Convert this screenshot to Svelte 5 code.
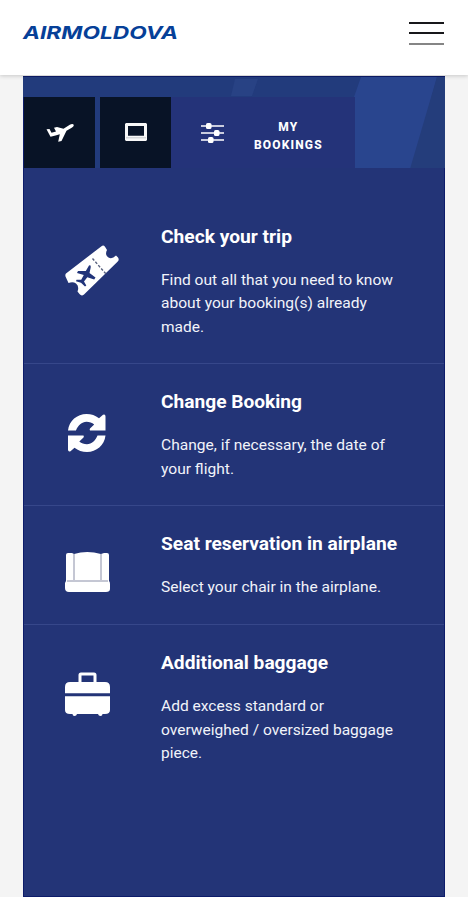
<script lang="ts">
	type Service = { icon: string; title: string; lines: string[]; width: number; widths: number[] };

	const services: Service[] = [
		{
			icon: 'ticket',
			title: 'Check your trip',
			width: 131,
			lines: ['Find out all that you need to know', 'about your booking(s) already', 'made.'],
			widths: [232, 206, 43]
		},
		{
			icon: 'refresh',
			title: 'Change Booking',
			width: 141,
			lines: ['Change, if necessary, the date of', 'your flight.'],
			widths: [224, 73]
		},
		{
			icon: 'seat',
			title: 'Seat reservation in airplane',
			width: 236,
			lines: ['Select your chair in the airplane.'],
			widths: [220]
		},
		{
			icon: 'baggage',
			title: 'Additional baggage',
			width: 167,
			lines: ['Add excess standard or', 'overweighed / oversized baggage', 'piece.'],
			widths: [163, 232, 41]
		}
	];

	const arrow =
		'M1 17.5C2 7.8 10.2 1 19.5 1 24.2 1 28.5 2.5 32 5.3L36 1.8Q38.5 1 38.5 3.5V17.5H23Q22.3 16.5 23 15.5L27.2 11.5C25 9.7 22.5 8.8 19.5 8.8 14.8 8.8 11 12.4 9 17.5z';
</script>

<div class="page">
	<header>
		<svg class="logo" width="156" height="20" viewBox="0 0 156 20" role="img" aria-label="Air Moldova">
			<text x="-1" y="16.2" textLength="155" lengthAdjust="spacingAndGlyphs">AIRMOLDOVA</text>
		</svg>
		<button class="menu" aria-label="Menu">
			<span></span>
			<span></span>
			<span></span>
		</button>
	</header>

	<main>
		<nav>
			<svg class="pattern" width="422" height="91" viewBox="0 0 422 91" aria-hidden="true">
				<path d="M0 0H236L228 20H0z" fill="#223b7c" />
				<path d="M212 2H235L229 19H208z" fill="#284284" />
				<path d="M338 0H414L389 92H331V20z" fill="#29458e" />
				<path d="M414 0H422V92H387z" fill="#243d7b" />
			</svg>
			<button class="tab" aria-label="Flights">
				<svg width="28" height="20" viewBox="0 0 28 20">
					<path
						d="M.5 6.3 3.5 6 5.5 9.8 10 8.5 8 4.7 11 4 17.5 5.8 23.8 1.8C25.6.8 27 .7 27.7 1.8 28 3 27 4.2 25.3 5.1L20.5 7.8 15.5 18 12.2 18.8 13.8 11.2 9.5 12.5 4.5 13.7z"
						fill="#fff"
					/>
				</svg>
			</button>
			<button class="tab" aria-label="Check-in">
				<svg width="22" height="19" viewBox="0 0 22 19">
					<path d="M1 0H21L22 1V17L21 18H1L0 17V1zM3 3V12.8H19V3z" fill="#f8f8f8" fill-rule="evenodd" />
					<path d="M1 14.8H21" stroke="#b9bcc2" stroke-width=".8" />
				</svg>
			</button>
			<button class="tab active">
				<svg width="23" height="22" viewBox="0 0 23 22">
					<path d="M0 4H23M0 11H23M0 18H23" stroke="#fff" stroke-width="1.6" />
					<g fill="#fff">
						<rect x="5" y="1" width="5.5" height="6" rx="1.6" />
						<rect x="13" y="8" width="5.5" height="6" rx="1.6" />
						<rect x="7" y="15" width="5.5" height="6" rx="1.6" />
					</g>
				</svg>
				<span>MY<br />BOOKINGS</span>
			</button>
		</nav>

		<div class="services">
			{#each services as service}
				<section>
					<div class="icon {service.icon}">
						{#if service.icon === 'ticket'}
							<svg width="54" height="52" viewBox="0 0 54 52">
								<path
									d="M1 28.5 36.5 1.2Q38.5-.2 40 1.8L42 5Q39.5 10 43.5 12.5 47 14.5 51 10.5L53 12.5Q54.6 14.8 52.5 16.8L19 49.5Q16.5 51.5 14.5 49L12.5 46.5Q14.5 41 11 38.5 8 36.5 3.5 38L.5 31.5Q0 29.5 1 28.5z"
									fill="#fff"
								/>
								<path
									d="M24 20.5Q26.2 19.5 25.7 22.5L24.5 28 30.5 32.5 29.2 34.5 22.3 32.2 19 36.5 21.3 40.5 20 41.5 16 37.7 11 36.2 11.5 34.8 16.2 34.8 18.8 30 12 28 13 26 20.8 26z"
									fill="#21347a"
								/>
								<path d="M27.5 13.5 41 29" stroke="#59627f" stroke-width="1.4" stroke-dasharray="2.7 1.7" />
							</svg>
						{:else if service.icon === 'refresh'}
							<svg width="40" height="40" viewBox="0 0 40 40">
								<path d={arrow} fill="#fff" />
								<path d={arrow} fill="#fff" transform="rotate(180 19.75 20)" />
							</svg>
						{:else if service.icon === 'seat'}
							<svg width="46" height="42" viewBox="0 0 46 42">
								<path d="M3 2H7L9 3Q22-.8 36 3L39 2H42Q44 2 44 4V30Q45 31 45 33V38Q45 41 41 41H4Q0 41 0 37V32L1 30V4Q1 2 3 2z" fill="#fff" />
								<path d="M9 3V29M36 3V29M2 30H43" fill="none" stroke="#8a8fa8" />
							</svg>
						{:else}
							<svg width="46" height="45" viewBox="0 0 46 45">
								<path d="M15 10V3Q15 2 16 2H29Q30 2 30 3V10" fill="none" stroke="#fff" stroke-width="3" />
								<path
									d="M5 10H40Q45 10 45 15V21.2H0V15Q0 10 5 10zM0 24.2H45V38Q45 42 40 42H37.5Q37.5 44 35.5 44 33.5 44 33 42H12Q11.5 44 9.5 44 7.5 44 7.5 42H5Q0 42 0 38z"
									fill="#fff"
								/>
							</svg>
						{/if}
					</div>
					<div class="copy">
						<h2>
							<svg width="250" height="24">
								<text x="0" y="18.5" textLength={service.width} lengthAdjust="spacingAndGlyphs">{service.title}</text>
							</svg>
						</h2>
						<p>
							{#each service.lines as line, i}
								<svg width="250" height="23.6">
									<text x="0" y="17" textLength={service.widths[i]} lengthAdjust="spacingAndGlyphs">{line}</text>
								</svg>
							{/each}
						</p>
					</div>
				</section>
			{/each}
		</div>
	</main>
</div>

<style>
	:global(body) {
		background: #fff;
	}
	.page {
		box-sizing: border-box;
		height: 900px;
		overflow: hidden;
		border-bottom: 3px solid #fff;
		background: #f4f4f4;
		color: #fff;
		font-family: Roboto, sans-serif;
	}
	header {
		position: relative;
		display: flex;
		align-items: flex-start;
		justify-content: space-between;
		box-sizing: border-box;
		height: 75px;
		padding: 20px 24px 0;
		background: #fff;
		box-shadow: 0 1px 4px rgb(0 0 0 / 18%);
	}
	.logo {
		display: block;
		margin-top: 3px;
		overflow: visible;
	}
	.logo text {
		fill: #064098;
		font: italic 700 17.5px Inter, sans-serif;
	}
	button {
		margin: 0;
		padding: 0;
		border: 0;
		color: inherit;
		font: inherit;
	}
	.menu {
		display: flex;
		flex-direction: column;
		gap: 8.5px;
		width: 35px;
		padding-top: 1.5px;
		background: none;
	}
	.menu span {
		height: 2px;
		background: #18181b;
	}
	.menu span:last-child {
		background: #858585;
	}
	main {
		box-sizing: border-box;
		width: 422px;
		height: 821px;
		margin: 1px auto 0;
		border: 1px solid #0d1c6a;
		background: #233477;
	}
	nav {
		position: relative;
		display: flex;
		gap: 5px;
		box-sizing: border-box;
		height: 91px;
		padding-top: 20px;
		background: #223b7c;
	}
	.pattern {
		position: absolute;
		top: 0;
		left: -1px;
	}
	.tab {
		position: relative;
		display: flex;
		align-items: center;
		justify-content: center;
		width: 71px;
		height: 71px;
		background: #081326;
	}
	.tab.active {
		justify-content: flex-start;
		gap: 30px;
		width: 184px;
		margin-left: -5px;
		padding-left: 30px;
		box-sizing: border-box;
		background: #243379;
		font-size: 12px;
		font-weight: 800;
		line-height: 18px;
		letter-spacing: 1.15px;
	}
	.tab.active span {
		padding-top: 7px;
	}
	.services {
		padding-top: 30px;
	}
	section {
		display: flex;
		align-items: center;
		box-sizing: border-box;
		border-bottom: 1px solid #36478a;
		padding: 25.5px 0 24.5px 41px;
	}
	section:last-child {
		border-bottom: 0;
	}
	.icon {
		display: flex;
		align-self: flex-start;
		align-items: center;
		width: 96px;
		height: 84px;
		margin-top: 5px;
	}
	.icon.refresh {
		box-sizing: border-box;
		height: 77px;
		padding-left: 2px;
	}
	.icon.seat {
		height: 72px;
		margin-bottom: -15px;
	}
	.icon.baggage {
		height: 78px;
	}
	.icon svg {
		display: block;
	}
	h2,
	p {
		margin: 0;
	}
	h2 {
		margin-bottom: 20px;
		font-size: 18.7px;
		font-weight: 700;
		line-height: 24px;
	}
	p {
		font-size: 15.3px;
		line-height: 23.6px;
	}
	.copy svg {
		display: block;
		overflow: visible;
		fill: #fff;
	}
	.copy p svg {
		fill: #f1f3fa;
	}
</style>
